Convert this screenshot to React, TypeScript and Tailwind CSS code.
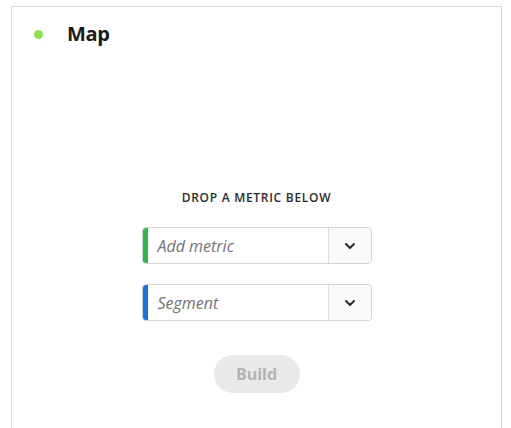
import { ChevronDown } from "lucide-react";

function Picker({ label, color }: { label: string; color: string }) {
  return (
    <div className="flex h-[37px] w-[230px] rounded-[4px] border border-[#d3d3d3] bg-white overflow-hidden">
      <div className={`w-[5px] shrink-0 ${color}`} />
      <div className="flex-1 flex items-center pl-[10px] text-[16px] italic text-[#747474]">
        {label}
      </div>
      <div className="w-[43px] shrink-0 flex items-center justify-center border-l border-[#dcdcdc] bg-[#fafafa]">
        <ChevronDown size={16} strokeWidth={3} className="text-[#2c2c2c]" />
      </div>
    </div>
  );
}

export default function App() {
  return (
    <div className="w-[511px] h-[428px] bg-white overflow-hidden font-['Open_Sans',sans-serif]">
      <div className="ml-[11px] mt-[6px] w-[491px] h-[422px] border border-b-0 border-[#dcdcdc] flex flex-col">
        <div className="flex items-center pl-[22px] pt-[14px] h-[40px]">
          <span className="w-[9px] h-[9px] rounded-full bg-[#8ee04b]" />
          <span className="ml-[24px] text-[20px] font-bold text-[#1a1a1a] tracking-[-0.02em]">Map</span>
        </div>

        <div className="flex flex-col items-center pt-[145px]">
          <p className="text-[12px] font-semibold tracking-[0.06em] text-[#2c2c2c] uppercase leading-none">
            Drop a metric below
          </p>
          <div className="mt-[23px] flex flex-col gap-[20px]">
            <Picker label="Add metric" color="bg-[#2db84a]" />
            <Picker label="Segment" color="bg-[#1473e6]" />
          </div>
          <button className="mt-[34px] w-[86px] h-[38px] rounded-full bg-[#e9e9e9] text-[16px] font-bold text-[#b3b3b3]">
            Build
          </button>
        </div>
      </div>
    </div>
  );
}
